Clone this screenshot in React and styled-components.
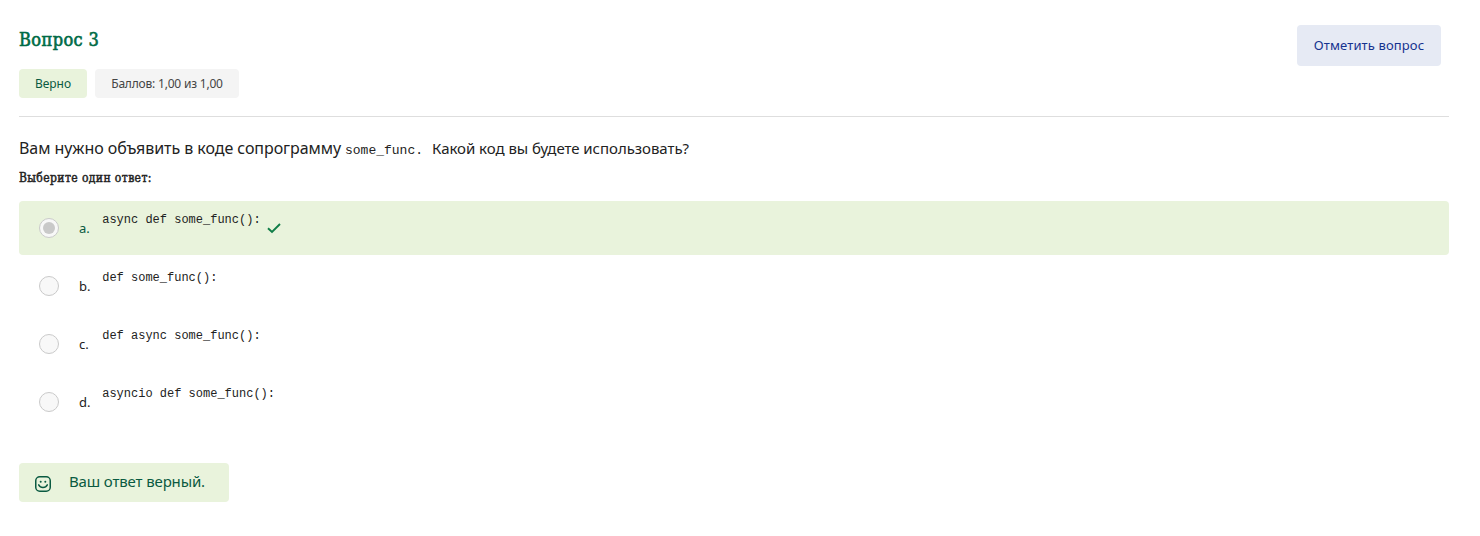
import React from "react";
import styled, { createGlobalStyle, css } from "styled-components";

const sans = `"Noto Sans", "Open Sans", sans-serif`;
const serif = `"DejaVu Serif Condensed", "DejaVu Serif", serif`;
const mono = `"Liberation Mono", monospace`;

const GlobalStyle = createGlobalStyle`
  *, *::before, *::after { box-sizing: border-box; }
  body { margin: 0; background: #fff; color: #222; font-family: ${sans}; }
  h2, h3, p, ul, pre { margin: 0; padding: 0; }
`;

const Page = styled.main`
  height: 536px;
  padding: 25px 31px 0 19px;
`;

const Header = styled.header`
  display: flex;
  justify-content: space-between;
  align-items: flex-start;
  height: 92px;
  padding-right: 8px;
  border-bottom: 1px solid #dedede;
`;

const Title = styled.h2`
  height: 30px;
  margin-bottom: 14px;
  font: normal 18px/30px ${serif};
  -webkit-text-stroke: 0.6px currentColor;
  letter-spacing: 0.4px;
  color: #006b45;
  white-space: nowrap;
`;

const Badges = styled.div`
  display: flex;
  gap: 8px;
`;

const Badge = styled.span`
  display: flex;
  justify-content: center;
  width: ${(p) => p.$width}px;
  height: 29px;
  border-radius: 4px;
  font-size: 12px;
  line-height: 29px;
  white-space: nowrap;
  letter-spacing: ${(p) => p.$tracking || 0}px;
  ${(p) =>
    p.$correct
      ? css`background: #e9f3dc; color: #0a5a41;`
      : css`background: #f4f4f4; color: #454545;`}
`;

const FlagButton = styled.button`
  width: 144px;
  height: 41px;
  padding: 0;
  border: 0;
  border-radius: 4px;
  background: #e6eaf4;
  color: #15338f;
  font: 13px/41px ${sans};
  letter-spacing: 0.12px;
  white-space: nowrap;
`;

const Question = styled.p`
  display: flex;
  align-items: baseline;
  height: 32px;
  margin-top: 15px;
  line-height: 32px;
  white-space: pre;
`;

const Lead = styled.span`
  width: 326px;
  font-size: 16px;
  letter-spacing: -0.06px;
`;

const InlineCode = styled.code`
  width: 87px;
  font: 13px/32px ${mono};
`;

const Tail = styled.span`
  font-size: 15px;
  letter-spacing: -0.04px;
`;

const Prompt = styled.h3`
  height: 20px;
  margin: 4px 0 13px;
  font: normal 12px/20px ${serif};
  -webkit-text-stroke: 0.45px currentColor;
  letter-spacing: 0.4px;
`;

const Answers = styled.ul`
  display: flex;
  flex-direction: column;
  gap: 4px;
  list-style: none;
`;

const Answer = styled.li`
  display: flex;
  height: 54px;
  padding-left: 20px;
  border-radius: 4px;
  background: ${(p) => (p.$correct ? "#e9f3dc" : "transparent")};
`;

const Radio = styled.span`
  display: grid;
  place-items: center;
  width: 20px;
  height: 20px;
  margin: 17px 20px 0 0;
  border: 1px solid #cacaca;
  border-radius: 50%;
  background: #f8f8f8;

  &::after {
    content: "";
    width: 12px;
    height: 12px;
    border-radius: 50%;
    background: ${(p) => (p.$checked ? "#c9c9c9" : "transparent")};
  }
`;

const Letter = styled.span`
  width: 23.2px;
  padding-top: 17px;
  font-size: 13px;
  line-height: 20px;
  color: ${(p) => (p.$correct ? "#0a5a41" : "#222")};
`;

const Code = styled.pre`
  padding-top: 10px;
  font: 12px/18px ${mono};
`;

const Check = styled.svg`
  width: 14px;
  height: 12px;
  margin: 21px 0 0 6px;
`;

const Feedback = styled.div`
  display: flex;
  align-items: center;
  width: 210px;
  height: 39px;
  margin-top: 34px;
  padding-left: 16px;
  border-radius: 4px;
  background: #e9f3dc;
  color: #0a5a41;
`;

const Smile = styled.svg`
  width: 16px;
  height: 16px;
  margin: 3px 18px 0 0;
`;

const FeedbackText = styled.span`
  font-size: 15px;
  line-height: 37px;
  padding-bottom: 2px;
  letter-spacing: -0.14px;
  white-space: nowrap;
`;

const options = [
  { letter: "a.", code: "async def some_func():", correct: true },
  { letter: "b.", code: "def some_func():" },
  { letter: "c.", code: "def async some_func():" },
  { letter: "d.", code: "asyncio def some_func():" },
];

export default function App() {
  return (
    <Page>
      <GlobalStyle />
      <Header>
        <div>
          <Title>Вопрос 3</Title>
          <Badges>
            <Badge $correct $width={68}>Верно</Badge>
            <Badge $width={144} $tracking={-0.2}>Баллов: 1,00 из 1,00</Badge>
          </Badges>
        </div>
        <FlagButton>Отметить вопрос</FlagButton>
      </Header>
      <Question>
        <Lead>Вам нужно объявить в коде сопрограмму</Lead>
        <InlineCode>some_func.</InlineCode>
        <Tail>Какой код вы будете использовать?</Tail>
      </Question>
      <Prompt>Выберите один ответ:</Prompt>
      <Answers>
        {options.map((o) => (
          <Answer key={o.letter} $correct={o.correct}>
            <Radio $checked={o.correct} />
            <Letter $correct={o.correct}>{o.letter}</Letter>
            <Code>{o.code}</Code>
            {o.correct && (
              <Check viewBox="0 0 14 12" fill="none">
                <path d="M1 6.2 5 10 13 2" stroke="#0f7d47" strokeWidth="1.9" />
              </Check>
            )}
          </Answer>
        ))}
      </Answers>
      <Feedback>
        <Smile viewBox="0 0 16 16" fill="none" stroke="currentColor">
          <rect x="0.75" y="0.75" width="14.5" height="14.5" rx="4" strokeWidth="1.5" />
          <path d="M3.7 8.8C5.4 12.3 10.6 12.3 12.3 8.8" strokeWidth="1.5" strokeLinecap="round" />
          <circle cx="5.7" cy="5.8" r="1" fill="currentColor" stroke="none" />
          <circle cx="10.3" cy="5.8" r="1" fill="currentColor" stroke="none" />
        </Smile>
        <FeedbackText>Ваш ответ верный.</FeedbackText>
      </Feedback>
    </Page>
  );
}
